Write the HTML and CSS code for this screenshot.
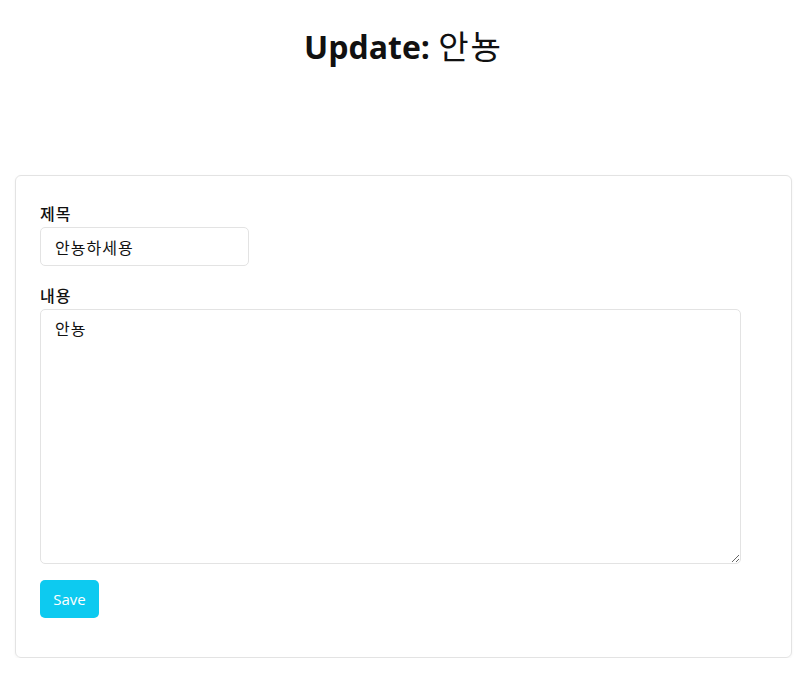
FILE: index.html
```html
<!DOCTYPE html>
<html lang="ko">
<head>
<meta charset="utf-8">
<link rel="stylesheet" href="styles.css">
</head>
<body>
<h1 class="title"><span class="title-strong">Update:</span> <span class="title-ko">안뇽</span></h1>
<div class="card">
  <form class="form">
    <div class="field">
      <label class="label" for="t">제목</label>
      <input class="input" id="t" type="text" value="안뇽하세용">
    </div>
    <div class="field">
      <label class="label" for="c">내용</label>
      <textarea class="textarea" id="c">안뇽</textarea>
    </div>
    <div class="actions">
      <button class="btn" type="button">Save</button>
    </div>
  </form>
</div>
</body>
</html>
```
FILE: styles.css
```css
html, body {
  margin: 0;
  padding: 0;
  background: #fff;
}
body {
  font-family: "Open Sans", "Noto Sans CJK KR", sans-serif;
  color: #111;
}
.title {
  margin: 0;
  padding-top: 23px;
  padding-left: 4px;
  height: 151px;
  box-sizing: border-box;
  text-align: center;
  font-size: 32px;
  font-weight: 400;
  line-height: 44px;
  font-family: "Open Sans", "Noto Sans CJK KR", sans-serif;
}
.title-strong {
  font-weight: 700;
}
.title-ko {
  font-family: "Noto Sans CJK KR", sans-serif;
  font-weight: 400;
  font-size: 33px;
  letter-spacing: 2px;
}
.card {
  margin: 24px 11px 0 15px;
  border: 1px solid #e3e3e3;
  border-radius: 6px;
  box-shadow: 0 1px 3px rgba(0,0,0,0.05);
  padding: 24px 24px 40px 24px;
  height: 483px;
  box-sizing: border-box;
}
.form {
  display: flex;
  flex-direction: column;
}
.field {
  display: flex;
  flex-direction: column;
  align-items: flex-start;
  margin-bottom: 16px;
}
.label {
  font-family: "Noto Sans CJK KR", sans-serif;
  font-weight: 500;
  font-size: 16px;
  line-height: 26px;
  margin-bottom: 1px;
  letter-spacing: 1px;
}
.input, .textarea {
  font-family: "Noto Sans CJK KR", sans-serif;
  font-size: 16px;
  color: #111;
  border: 1px solid #e3e3e3;
  border-radius: 5px;
  box-sizing: border-box;
  outline: none;
  background: #fff;
  letter-spacing: 1px;
}
.input {
  width: 209px;
  height: 39px;
  padding: 0 14px;
}
.textarea {
  width: 701px;
  height: 255px;
  padding: 6px 14px;
  resize: vertical;
}
.actions {
  display: flex;
}
.btn {
  background: #0dcaf0;
  color: #fff;
  border: none;
  border-radius: 5px;
  width: 59px;
  height: 38px;
  font-family: "Open Sans", sans-serif;
  font-size: 15px;
  padding: 0;
}
```
